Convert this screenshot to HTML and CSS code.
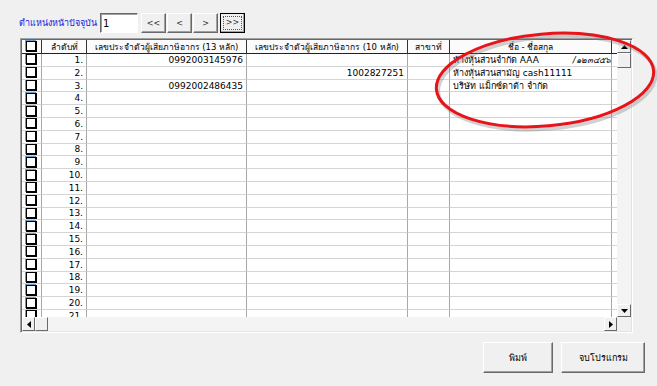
FILE: index.html
```html
<!DOCTYPE html>
<html lang="th">
<head>
  <meta charset="UTF-8" />
  <title>พิมพ์รายชื่อ</title>
  <link rel="stylesheet" href="styles.css">
</head>
<body>
  <!-- Page navigator -->
  <div class="pager">
    <span class="pager-label">ตำแหน่งหน้าปัจจุบัน</span>
    <input class="pager-input" type="text" value="1">
    <button class="nav-btn">&lt;&lt;</button>
    <button class="nav-btn">&lt;</button>
    <button class="nav-btn">&gt;</button>
    <button class="nav-btn nav-focus"><span>&gt;&gt;</span></button>
  </div>

  <!-- Grid -->
  <div class="grid-frame">
    <div class="view">
      <div class="row head">
        <div class="cell"><span class="chk"></span></div>
        <div class="cell">ลำดับที่</div>
        <div class="cell">เลขประจำตัวผู้เสียภาษีอากร (13 หลัก)</div>
        <div class="cell">เลขประจำตัวผู้เสียภาษีอากร (10 หลัก)</div>
        <div class="cell">สาขาที่</div>
        <div class="cell">ชื่อ - ชื่อสกุล</div>
        <div class="cell"></div>
      </div>
      <div class="row"><div class="cell"><span class="chk"></span></div><div class="cell num">1.</div><div class="cell num">0992003145976</div><div class="cell num"></div><div class="cell"></div><div class="cell name">ห้างหุ้นส่วนจำกัด AAA <i class="tail">/๑๒๓๔๕๖๗๘๙</i></div><div class="cell"></div></div>
      <div class="row"><div class="cell"><span class="chk"></span></div><div class="cell num">2.</div><div class="cell num"></div><div class="cell num">1002827251</div><div class="cell"></div><div class="cell name">ห้างหุ้นส่วนสามัญ cash11111</div><div class="cell"></div></div>
      <div class="row"><div class="cell"><span class="chk"></span></div><div class="cell num">3.</div><div class="cell num">0992002486435</div><div class="cell num"></div><div class="cell"></div><div class="cell name">บริษัท แม็กซ์ดาต้า จำกัด</div><div class="cell"></div></div>
      <div class="row"><div class="cell"><span class="chk"></span></div><div class="cell num">4.</div><div class="cell"></div><div class="cell"></div><div class="cell"></div><div class="cell"></div><div class="cell"></div></div>
      <div class="row"><div class="cell"><span class="chk"></span></div><div class="cell num">5.</div><div class="cell"></div><div class="cell"></div><div class="cell"></div><div class="cell"></div><div class="cell"></div></div>
      <div class="row"><div class="cell"><span class="chk"></span></div><div class="cell num">6.</div><div class="cell"></div><div class="cell"></div><div class="cell"></div><div class="cell"></div><div class="cell"></div></div>
      <div class="row"><div class="cell"><span class="chk"></span></div><div class="cell num">7.</div><div class="cell"></div><div class="cell"></div><div class="cell"></div><div class="cell"></div><div class="cell"></div></div>
      <div class="row"><div class="cell"><span class="chk"></span></div><div class="cell num">8.</div><div class="cell"></div><div class="cell"></div><div class="cell"></div><div class="cell"></div><div class="cell"></div></div>
      <div class="row"><div class="cell"><span class="chk"></span></div><div class="cell num">9.</div><div class="cell"></div><div class="cell"></div><div class="cell"></div><div class="cell"></div><div class="cell"></div></div>
      <div class="row"><div class="cell"><span class="chk"></span></div><div class="cell num">10.</div><div class="cell"></div><div class="cell"></div><div class="cell"></div><div class="cell"></div><div class="cell"></div></div>
      <div class="row"><div class="cell"><span class="chk"></span></div><div class="cell num">11.</div><div class="cell"></div><div class="cell"></div><div class="cell"></div><div class="cell"></div><div class="cell"></div></div>
      <div class="row"><div class="cell"><span class="chk"></span></div><div class="cell num">12.</div><div class="cell"></div><div class="cell"></div><div class="cell"></div><div class="cell"></div><div class="cell"></div></div>
      <div class="row"><div class="cell"><span class="chk"></span></div><div class="cell num">13.</div><div class="cell"></div><div class="cell"></div><div class="cell"></div><div class="cell"></div><div class="cell"></div></div>
      <div class="row"><div class="cell"><span class="chk"></span></div><div class="cell num">14.</div><div class="cell"></div><div class="cell"></div><div class="cell"></div><div class="cell"></div><div class="cell"></div></div>
      <div class="row"><div class="cell"><span class="chk"></span></div><div class="cell num">15.</div><div class="cell"></div><div class="cell"></div><div class="cell"></div><div class="cell"></div><div class="cell"></div></div>
      <div class="row"><div class="cell"><span class="chk"></span></div><div class="cell num">16.</div><div class="cell"></div><div class="cell"></div><div class="cell"></div><div class="cell"></div><div class="cell"></div></div>
      <div class="row"><div class="cell"><span class="chk"></span></div><div class="cell num">17.</div><div class="cell"></div><div class="cell"></div><div class="cell"></div><div class="cell"></div><div class="cell"></div></div>
      <div class="row"><div class="cell"><span class="chk"></span></div><div class="cell num">18.</div><div class="cell"></div><div class="cell"></div><div class="cell"></div><div class="cell"></div><div class="cell"></div></div>
      <div class="row"><div class="cell"><span class="chk"></span></div><div class="cell num">19.</div><div class="cell"></div><div class="cell"></div><div class="cell"></div><div class="cell"></div><div class="cell"></div></div>
      <div class="row"><div class="cell"><span class="chk"></span></div><div class="cell num">20.</div><div class="cell"></div><div class="cell"></div><div class="cell"></div><div class="cell"></div><div class="cell"></div></div>
      <div class="row"><div class="cell"><span class="chk"></span></div><div class="cell num">21.</div><div class="cell"></div><div class="cell"></div><div class="cell"></div><div class="cell"></div><div class="cell"></div></div>
    </div>
    <div class="vscroll">
      <div class="sb-btn"><svg width="7" height="4" viewBox="0 0 7 4"><path d="M3.5 0L7 4H0z" fill="#000"/></svg></div>
      <div class="sb-thumb"></div>
      <div class="sb-track"></div>
      <div class="sb-btn"><svg width="7" height="4" viewBox="0 0 7 4"><path d="M0 0H7L3.5 4z" fill="#000"/></svg></div>
    </div>
    <div class="hscroll">
      <div class="sb-btn"><svg width="4" height="7" viewBox="0 0 4 7"><path d="M4 0V7L0 3.5z" fill="#000"/></svg></div>
      <div class="sb-thumb"></div>
      <div class="sb-track"></div>
      <div class="sb-btn"><svg width="4" height="7" viewBox="0 0 4 7"><path d="M0 0L4 3.5 0 7z" fill="#000"/></svg></div>
    </div>
    <div class="corner"></div>

    <!-- highlight mark over the name column -->
    <svg class="mark" width="240" height="110" viewBox="0 0 240 110">
      <ellipse cx="120" cy="54" rx="109" ry="46" transform="rotate(-5 120 54)" fill="none" stroke="#7a7a7a" stroke-width="3.5" opacity="0.35" style="translate: 2px 3px"/>
      <ellipse cx="120" cy="54" rx="109" ry="46" transform="rotate(-5 120 54)" fill="none" stroke="#e8141b" stroke-width="3"/>
    </svg>
  </div>

  <!-- Actions -->
  <div class="actions">
    <button class="action-btn">พิมพ์</button>
    <button class="action-btn wide">จบโปรแกรม</button>
  </div>
</body>
</html>
```

FILE: styles.css
```css
body {
  margin: 0;
  background: #f0f0f0;
  font-family: Tahoma, "DejaVu Sans", "Noto Sans", sans-serif;
  font-size: 9px;
  color: #000;
}

.pager {
  display: flex;
  align-items: center;
  height: 20px;
  padding: 13px 0 0 19px;
}

.pager-label {
  color: #1515e0;
  font-size: 9px;
  margin-right: 3px;
}

.pager-input {
  width: 38px;
  height: 20px;
  box-sizing: border-box;
  padding: 0 2px;
  border: 1px solid;
  border-color: #696969 #fff #fff #696969;
  box-shadow: inset 1px 1px #a0a0a0;
  background: #fff;
  font: inherit;
  font-size: 10px;
  margin-right: 2px;
}

.nav-btn {
  width: 25px;
  height: 20px;
  margin: 0 0 0 1px;
  padding: 0;
  background: #f0f0f0;
  border: 1px solid;
  border-color: #fff #696969 #696969 #fff;
  box-shadow: inset -1px -1px #a0a0a0;
  font-family: "DejaVu Sans", sans-serif;
  font-size: 8px;
  color: #333;
}

.nav-focus {
  border: 1px solid #000;
  margin-left: 2px;
}

.nav-focus span {
  display: block;
  margin: 2px;
  border: 1px dotted #555;
  line-height: 12px;
}

.grid-frame {
  position: relative;
  margin: 5px 0 0 20px;
  width: 613px;
  height: 295px;
  box-sizing: border-box;
  border: 1px solid;
  border-color: #a0a0a0 #fff #fff #a0a0a0;
  box-shadow: inset 1px 1px #696969, inset -1px -1px #e3e3e3;
  padding: 1px;
  display: grid;
  grid-template-columns: 1fr 14px;
  grid-template-rows: 1fr 14px;
}

.view {
  overflow: hidden;
  background: #fff;
}

.row {
  display: grid;
  grid-template-columns: 20px 45px 160px 161px 42px 162px 6px;
  height: 12.8px;
}

.cell {
  border-right: 1px solid #a8a8a8;
  border-bottom: 1px solid #d4d4d4;
  line-height: 12px;
  padding: 0 3px;
  white-space: nowrap;
  overflow: hidden;
  display: flex;
  align-items: center;
}

.row .cell:first-child {
  justify-content: center;
  padding: 0;
}

.head {
  height: 14px;
  background: #fbfbfb;
}

.head .cell {
  justify-content: center;
  border-right-color: #333;
  border-bottom-color: #222;
  font-size: 8.5px;
}

.num {
  justify-content: flex-end;
}

.name {
  font-size: 9px;
}

.tail {
  margin-left: 34px;
  font-size: 8.5px;
}

.chk {
  width: 8px;
  height: 8px;
  background: #fff;
  border: 2px solid #000;
  border-top-width: 1px;
  border-left-width: 1px;
  box-shadow: -1px -1px #6b9cd6;
}

.vscroll {
  display: flex;
  flex-direction: column;
  background: #f0f0f0;
}

.hscroll {
  display: flex;
  background: #f0f0f0;
}

.sb-btn,
.sb-thumb {
  flex: 0 0 13px;
  display: flex;
  align-items: center;
  justify-content: center;
  background: #f0f0f0;
  border: 1px solid;
  border-color: #fff #696969 #696969 #fff;
  box-sizing: border-box;
}

.vscroll .sb-thumb {
  flex-basis: 15px;
}

.sb-track {
  flex: 1;
  background: #f4f4f4;
}

.corner {
  background: #f0f0f0;
}

.mark {
  position: absolute;
  left: 404px;
  top: -13px;
  pointer-events: none;
}

.actions {
  display: flex;
  justify-content: flex-end;
  gap: 8px;
  padding: 9px 12px 0 0;
}

.action-btn {
  width: 70px;
  height: 31px;
  padding: 0;
  background: #f0f0f0;
  border: 1px solid;
  border-color: #fff #696969 #696969 #fff;
  box-shadow: inset -1px -1px #a0a0a0;
  font-family: Tahoma, "DejaVu Sans", sans-serif;
  font-size: 9px;
}

.action-btn.wide {
  width: 84px;
}
```
